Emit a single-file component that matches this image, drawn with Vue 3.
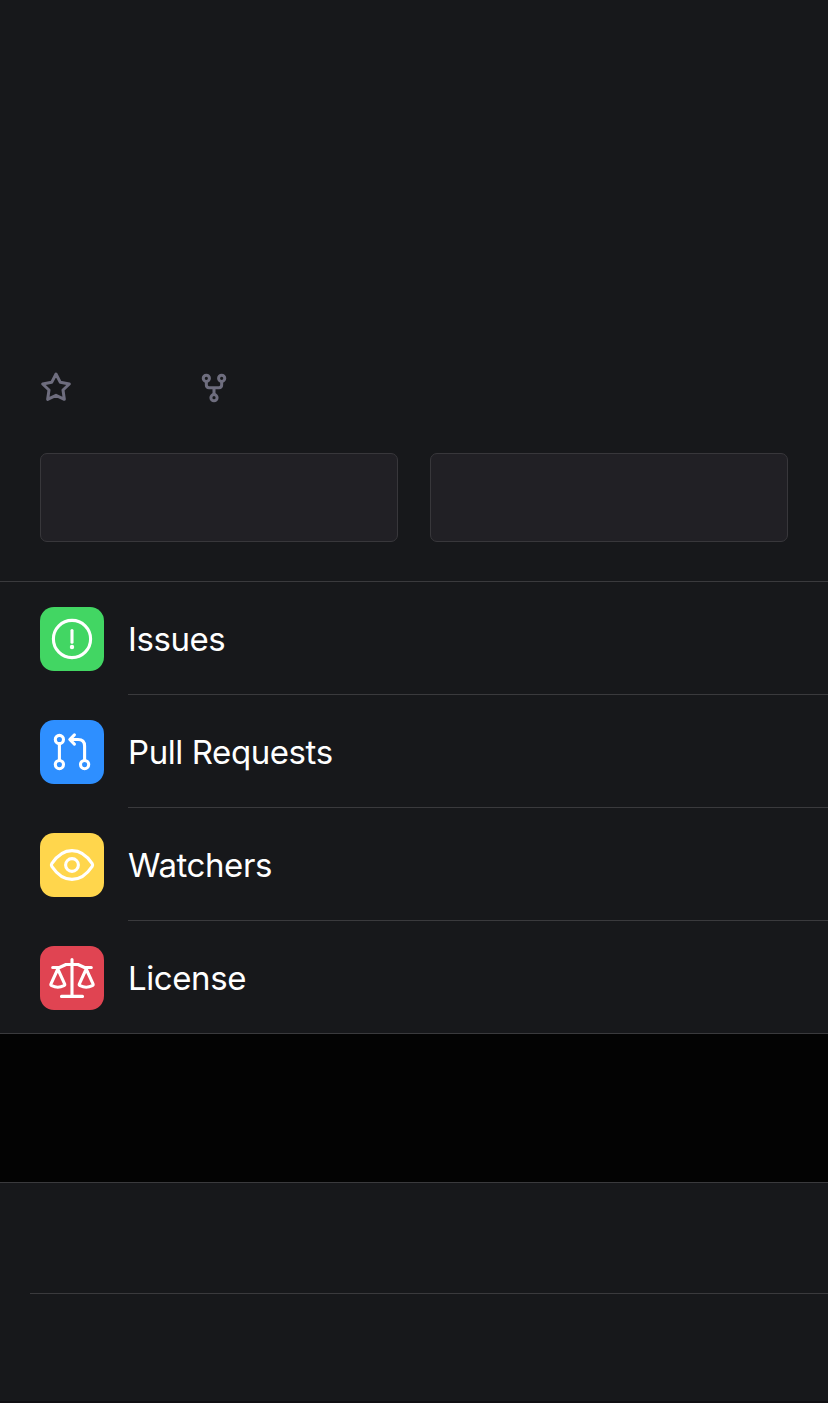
<script setup>
const rows = [
  { id: 'issues', label: 'Issues' },
  { id: 'pulls', label: 'Pull Requests' },
  { id: 'watchers', label: 'Watchers' },
  { id: 'license', label: 'License' },
]
</script>

<template>
  <main class="screen">
    <section class="header">
      <div class="stats">
        <svg class="star" viewBox="30 33 96 96">
          <path d="M78 42 L91 67 L118 72 L99 90 L103 118 L78 106 L53 118 L57 90 L38 72 L65 67 Z" />
        </svg>
        <svg class="fork" viewBox="510 33 84 96">
          <circle cx="529" cy="55" r="9.3" />
          <circle cx="575" cy="55" r="9.3" />
          <circle cx="552" cy="113" r="9.3" />
          <path d="M529 66 V75 Q529 83 537 83 H567 Q575 83 575 75 V66 M552 83 V102" />
        </svg>
      </div>
      <div class="actions">
        <div class="action"></div>
        <div class="action"></div>
      </div>
    </section>

    <nav class="list">
      <div v-for="row in rows" :key="row.id" class="row">
        <div class="tile" :class="row.id">
          <svg viewBox="0 0 64 64">
            <template v-if="row.id === 'issues'">
              <circle cx="32" cy="32" r="18.6" />
              <path d="M32 23.6 V35.2" />
              <circle class="dot" cx="32" cy="40" r="2.2" />
            </template>
            <template v-else-if="row.id === 'pulls'">
              <circle cx="19.4" cy="19.5" r="4.1" />
              <circle cx="19.4" cy="44.6" r="4.1" />
              <circle cx="44.6" cy="44.6" r="4.1" />
              <path d="M19.4 24 V40 M30.5 19.5 H38 Q44.6 19.5 44.6 26 V40 M34.4 14.9 L29.8 19.5 L34.4 24.1" />
            </template>
            <template v-else-if="row.id === 'watchers'">
              <path d="M11.8 30.6 C16.5 23.5 23.5 17.6 32 17.6 S47.5 23.5 52.2 30.6 Q53 32 52.2 33.4 C47.5 40.5 40.5 46.4 32 46.4 S16.5 40.5 11.8 33.4 Q11 32 11.8 30.6 Z" />
              <circle cx="32" cy="32" r="6.4" />
            </template>
            <template v-else>
              <path d="M32 13.6 V50.4 M21.5 50.4 H42.5 M12.7 21.5 H19.5 L26 18.5 H38 L44.5 21.5 H51.3" />
              <path d="M17.8 23 L11 37.8 Q10.5 39 11.7 39.7 Q17.8 42.7 23.9 39.7 Q25.1 39 24.6 37.8 Z" />
              <path d="M46.2 23 L39.4 37.8 Q38.9 39 40.1 39.7 Q46.2 42.7 52.3 39.7 Q53.5 39 53 37.8 Z" />
            </template>
          </svg>
        </div>
        <div class="label"><span>{{ row.label }}</span></div>
      </div>
    </nav>

    <div class="gap"></div>
    <section class="details">
      <div class="detail"></div>
    </section>
  </main>
</template>

<style>
body {
  background: #17181b;
}
</style>

<style scoped>
.screen {
  width: 828px;
  height: 1403px;
  box-sizing: border-box;
  overflow: hidden;
  background: #17181b;
  border-bottom: 2px solid #100f12;
  font-family: Inter, "Liberation Sans", sans-serif;
  display: flex;
  flex-direction: column;
}
.header {
  height: 582px;
  box-sizing: border-box;
  padding: 371px 40px 0;
  border-bottom: 1px solid #3a3a3d;
}
.stats {
  display: flex;
  gap: 128px;
}
.stats svg {
  height: 32px;
  fill: none;
  stroke: #6e6d7e;
  stroke-width: 9;
  stroke-linejoin: round;
}
.star { width: 32px; }
.fork { width: 28px; }
.actions {
  display: grid;
  grid-template-columns: 1fr 1fr;
  gap: 32px;
  margin-top: 50px;
}
.action {
  height: 89px;
  box-sizing: border-box;
  border: 1px solid #38373b;
  border-radius: 7px;
  background: #212025;
}
.row {
  height: 113px;
  padding-left: 40px;
  display: flex;
  gap: 24px;
}
.row:last-child {
  box-sizing: border-box;
  border-bottom: 1px solid #3a3a3d;
}
.tile {
  width: 64px;
  height: 64px;
  margin-top: 25px;
  border-radius: 14px;
  overflow: hidden;
}
.issues { background: #42d663; }
.pulls { background: #2e8fff; }
.watchers { background: #ffd64c; }
.license { background: #e04452; }
.tile svg {
  display: block;
  width: 64px;
  height: 64px;
  fill: none;
  stroke: #fff;
  stroke-width: 3.1;
  stroke-linecap: round;
  stroke-linejoin: round;
}
.tile .dot {
  fill: #fff;
  stroke: none;
}
.label {
  flex: 1;
  box-sizing: border-box;
  padding-top: 33px;
  border-bottom: 1px solid #3a3a3d;
  color: #fff;
  font-size: 33px;
  line-height: 48px;
  letter-spacing: -0.42px;
}
.row:last-child .label {
  border-bottom: 0;
}
.gap {
  height: 148px;
  background: #030303;
}
.details {
  flex: 1;
  border-top: 1px solid #3a3a3d;
}
.detail {
  height: 110px;
  margin-left: 30px;
  border-bottom: 1px solid #3a3a3d;
}
</style>
